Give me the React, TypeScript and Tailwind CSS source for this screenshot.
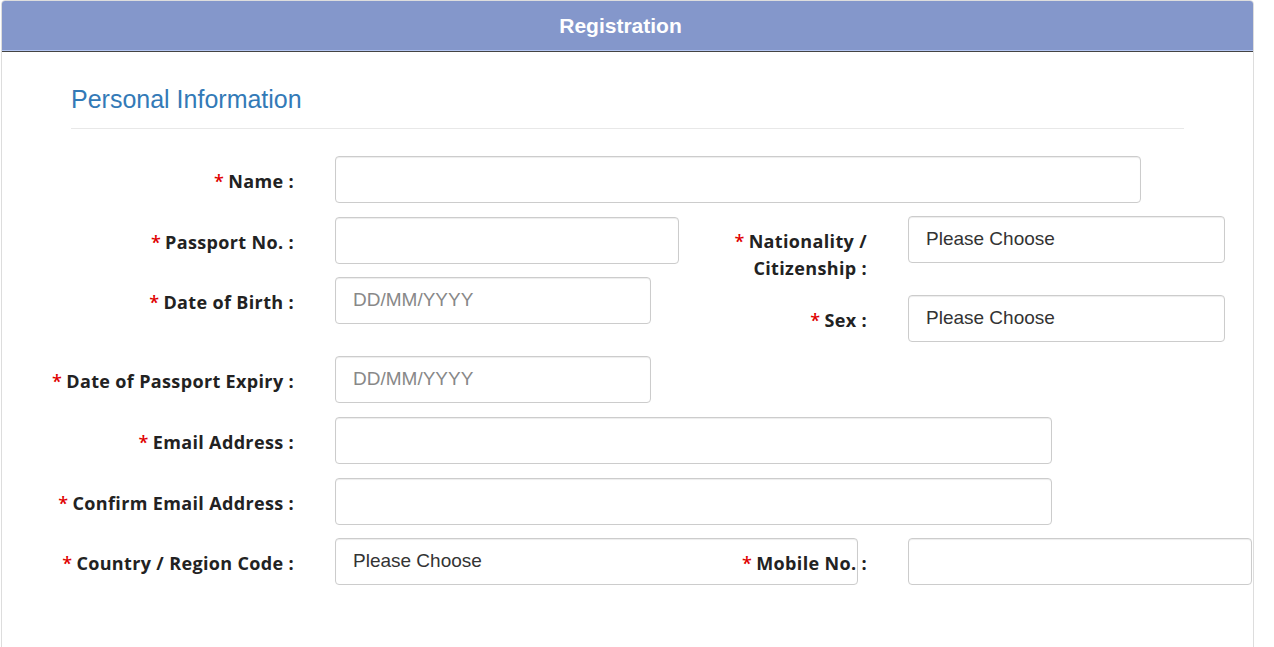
import React from 'react'

const labelFont = { fontFamily: '"Open Sans", "Noto Sans", sans-serif' }
const inputFont = { fontFamily: '"Liberation Sans", Arial, sans-serif' }

function Label({ text, width }: { text: string; width: string }) {
  return (
    <div
      className={`${width} shrink-0 pt-[12px] text-right text-[18px] leading-[27px] font-bold tracking-[0.35px] text-[#222]`}
      style={labelFont}
    >
      <span className="text-[#e00000] font-semibold mr-[4px]">*</span>
      {text}
    </div>
  )
}

function Field({ width, placeholder, value }: { width: string; placeholder?: string; value?: string }) {
  return (
    <div
      className={`${width} h-[47px] shrink-0 ml-[41px] rounded-[4px] border border-[#cccccc] bg-white shadow-[inset_0_1px_1px_rgba(0,0,0,0.075)] px-[17px] flex items-center text-[19px]`}
      style={inputFont}
    >
      {value ? (
        <span className="text-[#333] -mt-[1px]">{value}</span>
      ) : placeholder ? (
        <span className="text-[#888] -mt-[1px]">{placeholder}</span>
      ) : null}
    </div>
  )
}

export default function App() {
  return (
    <div className="w-[1274px] h-[647px] overflow-hidden bg-white">
      <div className="ml-[1px] w-[1253px] min-h-[700px] border border-[#dddddd] rounded-t-[4px]">
        {/* Header */}
        <div className="bg-[#8497cb] rounded-t-[3px]">
          <div
            className="h-[49px] flex items-center justify-center pr-[14px] text-white text-[21px] font-bold"
            style={inputFont}
          >
            Registration
          </div>
          <div className="h-px bg-[#b4c6f2]" />
          <div className="h-px bg-[#444]" />
        </div>

        {/* Legend */}
        <div className="pl-[69px] pt-[34px]">
          <div
            className="w-[1113px] text-[25px] leading-[27px] text-[#337ab7] pb-[15px] border-b border-[#e8e8e8]"
            style={inputFont}
          >
            Personal Information
          </div>
        </div>

        <div className="pt-[27px]">
          {/* Name */}
          <div className="flex mb-[13px]">
            <Label text="Name :" width="w-[292px]" />
            <Field width="w-[806px]" />
          </div>

          {/* Passport / Nationality / DOB / Sex */}
          <div className="flex mb-[14px]">
            <div className="w-[635px] shrink-0 pt-px">
              <div className="flex mb-[13px]">
                <Label text="Passport No. :" width="w-[292px]" />
                <Field width="w-[344px]" />
              </div>
              <div className="flex">
                <Label text="Date of Birth :" width="w-[292px]" />
                <Field width="w-[316px]" placeholder="DD/MM/YYYY" />
              </div>
            </div>
            <div>
              <div className="flex mb-[13px]">
                <Label text="Nationality / Citizenship :" width="w-[230px]" />
                <Field width="w-[317px]" value="Please Choose" />
              </div>
              <div className="flex">
                <Label text="Sex :" width="w-[230px]" />
                <Field width="w-[317px]" value="Please Choose" />
              </div>
            </div>
          </div>

          {/* Expiry */}
          <div className="flex mb-[14px]">
            <Label text="Date of Passport Expiry :" width="w-[292px]" />
            <Field width="w-[316px]" placeholder="DD/MM/YYYY" />
          </div>

          {/* Email */}
          <div className="flex mb-[14px]">
            <Label text="Email Address :" width="w-[292px]" />
            <Field width="w-[717px]" />
          </div>

          {/* Confirm Email */}
          <div className="flex mb-[13px]">
            <Label text="Confirm Email Address :" width="w-[292px]" />
            <Field width="w-[717px]" />
          </div>

          {/* Country / Mobile */}
          <div className="flex">
            <div className="w-[635px] shrink-0 flex">
              <Label text="Country / Region Code :" width="w-[292px]" />
              <Field width="w-[523px]" value="Please Choose" />
            </div>
            <div className="flex relative">
              <Label text="Mobile No. :" width="w-[230px]" />
              <Field width="w-[344px]" />
            </div>
          </div>
        </div>
      </div>
    </div>
  )
}
